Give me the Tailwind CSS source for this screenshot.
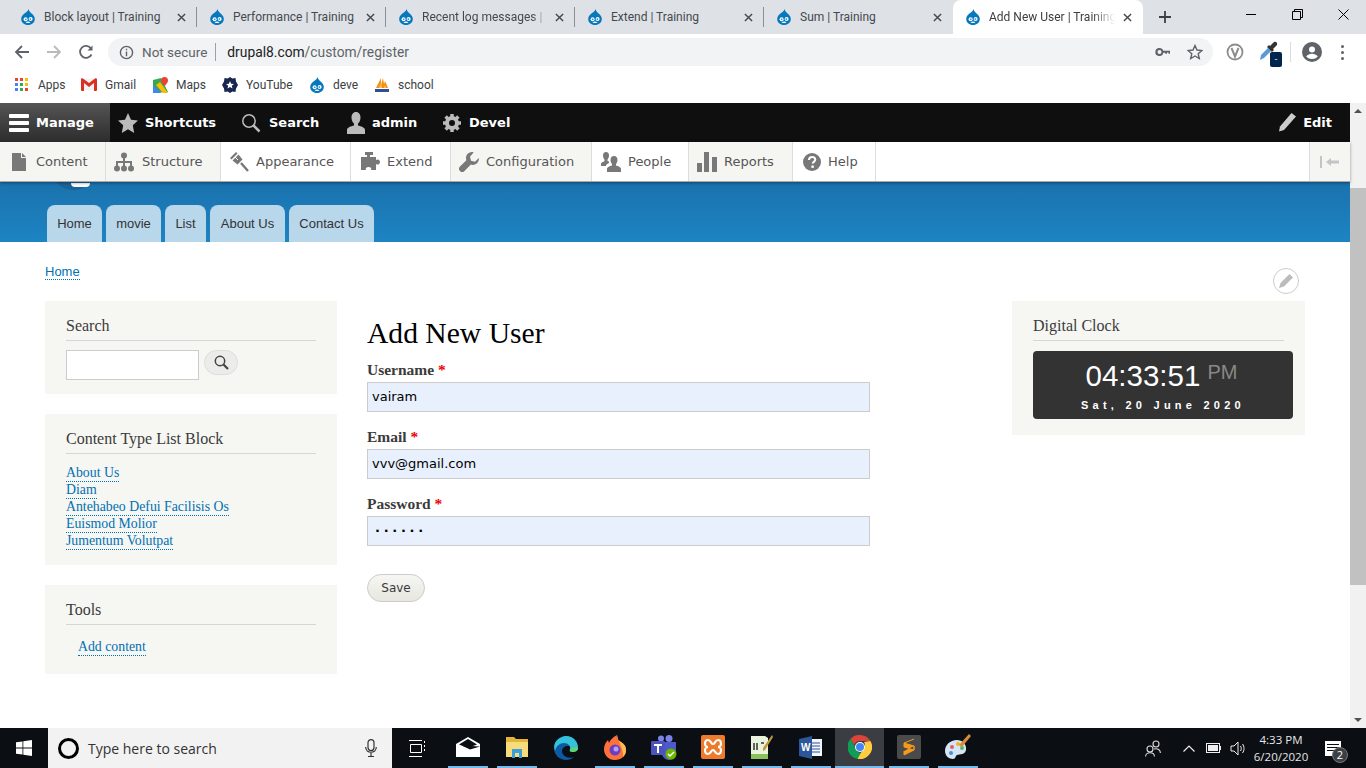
<!DOCTYPE html>
<html lang="en">
<head>
    <meta charset="UTF-8">
    <title>Add New User | Training</title>
    <script src="https://cdn.jsdelivr.net/npm/@tailwindcss/browser@4"></script>
</head>
<body class="w-[1366px] h-[768px] overflow-hidden flex flex-col bg-white font-['Roboto',sans-serif]">
    <svg class="hidden">
        <symbol id="drop" viewBox="0 0 16 16">
            <path fill="#0678be" d="M8.600 0c.3 2.600 2.400 3.700 3.900 5.300 1.500 1.500 2.300 3.100 2.300 4.700 0 3.500-3 6-6.800 6S1.200 13.500 1.200 10c0-2.400 1.600-4.200 3.500-5.700C6.300 3 8 2.300 8.600 0z"/>
            <circle cx="5.600" cy="10.200" r="2" fill="#fff"/>
            <circle cx="10.600" cy="10" r="2" fill="#fff"/>
            <path fill="#fff" d="M5.500 13.300c1.500-1 3.500-1 5 0-.6 1-4.400 1-5 0z"/>
            <circle cx="5.800" cy="10.300" r=".8" fill="#0678be"/>
            <circle cx="10.300" cy="10.100" r=".8" fill="#0678be"/>
        </symbol>
        <symbol id="close" viewBox="0 0 10 10">
            <path d="M1 1l8 8M9 1l-8 8" stroke="#45484c" stroke-width="1.600" fill="none"/>
        </symbol>
    </svg>

    <!-- browser tabs -->
    <div class="h-[34px] bg-[#dee1e6] flex pl-2 text-xs text-[#45494e] shrink-0">
        <div class="w-[189px] flex items-center relative">
            <svg class="w-4 h-4 ml-3"><use href="#drop"/></svg>
            <span class="ml-2 flex-1">Block layout | Training</span>
            <svg class="w-[9px] h-[9px] mr-[10px]"><use href="#close"/></svg>
            <span class="w-px h-[20px] bg-[#8c8f94]"></span>
        </div>
        <div class="w-[189px] flex items-center relative">
            <svg class="w-4 h-4 ml-3"><use href="#drop"/></svg>
            <span class="ml-2 flex-1">Performance | Training</span>
            <svg class="w-[9px] h-[9px] mr-[10px]"><use href="#close"/></svg>
            <span class="w-px h-[20px] bg-[#8c8f94]"></span>
        </div>
        <div class="w-[189px] flex items-center relative">
            <svg class="w-4 h-4 ml-3"><use href="#drop"/></svg>
            <span class="ml-2 w-[125px] overflow-hidden whitespace-nowrap [mask-image:linear-gradient(to_right,black_88%,transparent)]">Recent log messages | Training</span>
            <span class="flex-1"></span>
            <svg class="w-[9px] h-[9px] mr-[10px]"><use href="#close"/></svg>
            <span class="w-px h-[20px] bg-[#8c8f94]"></span>
        </div>
        <div class="w-[189px] flex items-center relative">
            <svg class="w-4 h-4 ml-3"><use href="#drop"/></svg>
            <span class="ml-2 flex-1">Extend | Training</span>
            <svg class="w-[9px] h-[9px] mr-[10px]"><use href="#close"/></svg>
            <span class="w-px h-[20px] bg-[#8c8f94]"></span>
        </div>
        <div class="w-[189px] flex items-center relative">
            <svg class="w-4 h-4 ml-3"><use href="#drop"/></svg>
            <span class="ml-2 flex-1">Sum | Training</span>
            <svg class="w-[9px] h-[9px] mr-[11px]"><use href="#close"/></svg>
        </div>
        <div class="w-[190px] flex items-center bg-white rounded-t-lg text-[#3c4043]">
            <svg class="w-4 h-4 ml-3"><use href="#drop"/></svg>
            <span class="ml-2 w-[126px] overflow-hidden whitespace-nowrap [mask-image:linear-gradient(to_right,black_82%,transparent)]">Add New User | Training</span>
            <span class="flex-1"></span>
            <svg class="w-[9px] h-[9px] mr-[11px]"><use href="#close"/></svg>
        </div>
        <svg class="w-3 h-3 ml-[16px] mt-[11px]" viewBox="0 0 12 12"><path d="M6 0v12M0 6h12" stroke="#3c4043" stroke-width="1.800"/></svg>
        <div class="ml-auto flex items-start">
            <div class="w-[46px] h-[28px] flex items-center justify-center"><span class="w-[10px] h-px bg-black"></span></div>
            <div class="w-[46px] h-[28px] flex items-center justify-center">
                <svg class="w-[11px] h-[11px]" viewBox="0 0 11 11" fill="none" stroke="#000"><path d="M.5 2.500h8v8h-8zM2.500 2.500v-2h8v8h-2"/></svg>
            </div>
            <div class="w-[46px] h-[28px] flex items-center justify-center">
                <svg class="w-[11px] h-[11px]" viewBox="0 0 11 11" stroke="#000"><path d="M.5.500l10 10M10.500.500l-10 10"/></svg>
            </div>
        </div>
    </div>

    <!-- address bar -->
    <div class="h-[36px] flex items-center shrink-0 relative">
        <svg class="w-4 h-4 ml-[14px]" viewBox="0 0 16 16" fill="none" stroke="#5f6368" stroke-width="1.800"><path d="M15 8H2M8 2L2 8l6 6"/></svg>
        <svg class="w-4 h-4 ml-[16px]" viewBox="0 0 16 16" fill="none" stroke="#b8babd" stroke-width="1.800"><path d="M1 8h13M8 2l6 6-6 6"/></svg>
        <svg class="w-4 h-4 ml-[16px]" viewBox="0 0 16 16" fill="none" stroke="#5f6368" stroke-width="1.800"><path d="M13.500 10.500A6 6 0 1 1 13 4.500"/><path fill="#5f6368" stroke="none" d="M14.500 1.500v5h-5z"/></svg>
        <div class="ml-[14px] w-[1105px] h-[28px] rounded-full bg-[#f1f3f4] flex items-center text-sm">
            <svg class="w-[15px] h-[15px] ml-[11px]" viewBox="0 0 16 16" fill="none" stroke="#5f6368" stroke-width="1.500"><circle cx="8" cy="8" r="6.500"/><path d="M8 7v5M8 4v1.600"/></svg>
            <span class="ml-[8px] pt-[1px] text-[#5f6368] text-[13.500px]">Not secure</span>
            <span class="ml-[8px] w-px h-[18px] bg-[#9aa0a6]"></span>
            <span class="ml-[11px] pt-[1px] text-[#202124] text-[13.800px]">drupal8.com<span class="text-[#5f6368]">/custom/register</span></span>
            <svg class="w-4 h-4 ml-auto" viewBox="0 0 16 16" fill="#5f6368"><path d="M4.500 4a4 4 0 0 1 3.800 2.800H15v3h-1.500v-1.300H12v1.300h-1.700V8.700H8.300A4 4 0 1 1 4.500 4zm0 2a2 2 0 1 0 0 4 2 2 0 0 0 0-4z"/></svg>
            <svg class="w-4 h-4 ml-[16px] mr-[10px]" viewBox="0 0 16 16" fill="none" stroke="#5f6368" stroke-width="1.400"><path d="M8 1.500l2 4.500 4.900.5-3.700 3.200 1.100 4.800L8 12l-4.300 2.500 1.100-4.800L1.100 6.500 6 6z"/></svg>
        </div>
        <svg class="w-[18px] h-[18px] ml-[13px]" viewBox="0 0 18 18" fill="none"><circle cx="9" cy="9" r="7.500" stroke="#8d8d8d" stroke-width="1.800"/><path d="M5.500 5l3.500 8.500L12.500 5" stroke="#8d8d8d" stroke-width="2"/></svg>
        <div class="relative w-[24px] h-[24px] ml-[13px]">
            <svg class="w-[22px] h-[22px]" viewBox="0 0 22 22"><path d="M3 20l1-5 7-7 3 3-7 7z" fill="#5b9bd5"/><path d="M10 7l5 5 2-2-1-1 4-4c1-3-2-4-3-3l-4 4-1-1z" fill="#333"/></svg>
            <span class="absolute right-[-1px] bottom-[-3px] w-[12px] h-[15px] rounded-[2px] bg-[#00264d] text-white text-[9px] leading-[15px] text-center">-</span>
        </div>
        <span class="ml-[9px] w-px h-[20px] bg-[#dadce0]"></span>
        <svg class="w-5 h-5 ml-[11px]" viewBox="0 0 20 20"><circle cx="10" cy="10" r="10" fill="#5f6368"/><circle cx="10" cy="7.500" r="3" fill="#fff"/><path d="M4.200 14.500c1.400-2 3.500-2.800 5.800-2.800s4.400.8 5.800 2.800c-1.500 1.700-3.500 2.500-5.800 2.500s-4.300-.8-5.800-2.500z" fill="#fff"/></svg>
        <div class="ml-[19px] flex flex-col gap-[3px]">
            <span class="w-[3px] h-[3px] rounded-full bg-[#5f6368]"></span>
            <span class="w-[3px] h-[3px] rounded-full bg-[#5f6368]"></span>
            <span class="w-[3px] h-[3px] rounded-full bg-[#5f6368]"></span>
        </div>
    </div>

    <!-- bookmarks -->
    <div class="h-[33px] flex items-center text-xs text-[#3c4043] shrink-0 border-b-[4px] border-white">
        <div class="ml-[15px] grid grid-cols-3 gap-[2px] w-[13px]">
            <span class="w-[3px] h-[3px] bg-[#ea4335]"></span><span class="w-[3px] h-[3px] bg-[#ea4335]"></span><span class="w-[3px] h-[3px] bg-[#fbbc05]"></span>
            <span class="w-[3px] h-[3px] bg-[#4285f4]"></span><span class="w-[3px] h-[3px] bg-[#34a853]"></span><span class="w-[3px] h-[3px] bg-[#fbbc05]"></span>
            <span class="w-[3px] h-[3px] bg-[#4285f4]"></span><span class="w-[3px] h-[3px] bg-[#34a853]"></span><span class="w-[3px] h-[3px] bg-[#ea4335]"></span>
        </div>
        <span class="ml-[10px] w-[43px]">Apps</span>
        <svg class="w-4 h-[13px]" viewBox="0 0 16 13"><path fill="#f1f1f1" d="M1 1h14v11H1z"/><path fill="#d93025" d="M0 1.500V12a1 1 0 0 0 1 1h2V5l5 4 5-4v8h2a1 1 0 0 0 1-1V1.500C16 .3 14.700 0 14 .5L8 5 2 .5C1.300 0 0 .3 0 1.500z"/></svg>
        <span class="ml-[8px] w-[48px]">Gmail</span>
        <svg class="w-[15px] h-4" viewBox="0 0 15 16"><path fill="#34a853" d="M0 3l8-2 7 14-15 1z"/><path fill="#4285f4" d="M0 8l8 8H0z"/><path fill="#fbbc05" d="M3 8l7 8h5L7 5z"/><path fill="#ea4335" d="M11.500 0A3.500 3.500 0 0 0 8 3.500C8 6 11.500 9 11.500 9S15 6 15 3.500A3.500 3.500 0 0 0 11.500 0z"/></svg>
        <span class="ml-[8px] w-[46px]">Maps</span>
        <svg class="w-4 h-4" viewBox="0 0 16 16"><path fill="#18254f" d="M8 0l2.300 1.500L13.500 1 14 4.500 16 8l-2 3.500-.5 3.500-3.200-.5L8 16l-2.300-1.500-3.200.5L2 11.500 0 8l2-3.500L2.500 1l3.200.5z"/><path fill="#fff" d="M8 4l1.100 2.700 2.900.2-2.200 1.900.7 2.800L8 10.100l-2.500 1.500.7-2.800L4 6.900l2.900-.2z"/></svg>
        <span class="ml-[8px] w-[63px]">YouTube</span>
        <svg class="w-4 h-4"><use href="#drop"/></svg>
        <span class="ml-[8px] w-[41px]">deve</span>
        <svg class="w-4 h-4" viewBox="0 0 16 16"><path fill="#f29111" d="M2 11L7 1v7l2-7 1 6 1-3 3 7z"/><path fill="#f7c26b" d="M5 11l2-5 1 5zM10 11l1-3 1 3z"/><path fill="#2f4f8f" d="M1 12h14v3H1z"/></svg>
        <span class="ml-[8px]">school</span>
    </div>

    <!-- page and scrollbar -->
    <div class="flex-1 flex min-h-0">
        <div class="flex-1 flex flex-col min-w-0">
            <!-- admin toolbar -->
            <div class="h-[39px] bg-[#0f0f0f] flex items-center text-white text-[13px] font-bold font-['DejaVu_Sans',sans-serif] shrink-0">
                <div class="w-[110px] h-full flex items-center bg-gradient-to-b from-[#555] to-[#2d2d2d]">
                    <div class="ml-[9px] w-[20px] flex flex-col gap-[3px]">
                        <span class="h-[4px] bg-white rounded-[1px]"></span>
                        <span class="h-[4px] bg-white rounded-[1px]"></span>
                        <span class="h-[4px] bg-white rounded-[1px]"></span>
                    </div>
                    <span class="ml-[7px]">Manage</span>
                </div>
                <svg class="w-[20px] h-[20px] ml-[8px]" viewBox="0 0 20 20"><path fill="#bbb" d="M10 0l3 6.700 7 .8-5.200 4.800L16.200 20 10 16.300 3.800 20l1.400-7.700L0 7.500l7-.8z"/></svg>
                <span class="ml-[7px] w-[96px]">Shortcuts</span>
                <svg class="w-[20px] h-[20px]" viewBox="0 0 20 20" fill="none" stroke="#bbb"><circle cx="8" cy="8" r="6.200" stroke-width="1.500"/><path d="M12.500 12.500l6 6" stroke-width="2.500"/></svg>
                <span class="ml-[8px] w-[72px]">Search</span>
                <svg class="w-[20px] h-[22px] ml-[5px]" viewBox="0 0 20 22"><path fill="#bbb" d="M10 0c3 0 4.500 2.500 4.500 5.500 0 2.500-1 5-2.500 6v2c3 .8 7 2 7 4.500V22H1v-4c0-2.500 4-3.700 7-4.500v-2c-1.500-1-2.500-3.500-2.500-6C5.500 2.500 7 0 10 0z"/></svg>
                <span class="ml-[6px] w-[70px]">admin</span>
                <svg class="w-[20px] h-[20px]" viewBox="0 0 20 20"><circle cx="10" cy="10" r="5" fill="none" stroke="#bbb" stroke-width="4"/><path d="M10 1v18M1 10h18M3.600 3.600l12.800 12.800M16.400 3.600L3.600 16.400" stroke="#bbb" stroke-width="3.500"/><circle cx="10" cy="10" r="3" fill="#0f0f0f"/></svg>
                <span class="ml-[7px]">Devel</span>
                <svg class="w-[19px] h-[19px] ml-auto" viewBox="0 0 19 19"><path fill="#ccc" d="M14.500 0L19 3.500 7 17l-5 1.500 1-5z"/></svg>
                <span class="ml-[7px] mr-[18px]">Edit</span>
            </div>
            <!-- toolbar tray -->
            <div class="h-[40px] flex text-[13px] text-[#565656] font-['DejaVu_Sans',sans-serif] border-b border-[#aaa] shadow-[0_1px_3px_rgba(0,0,0,0.4)] bg-white shrink-0 relative z-10">
                <div class="w-[106px] flex items-center bg-[#f5f5f2] border-r border-[#ddd]">
                    <svg class="w-[16px] h-[18px] ml-[11px]" viewBox="0 0 16 18"><path fill="#787878" d="M1 0h9v5h5v13H1zM11 0l4 4h-4z"/></svg>
                    <span class="ml-[9px]">Content</span>
                </div>
                <div class="w-[115px] flex items-center bg-[#f5f5f2] border-r border-[#ddd]">
                    <svg class="w-[20px] h-[20px] ml-[8px]" viewBox="0 0 20 20" fill="#787878"><circle cx="10" cy="3.500" r="3"/><circle cx="3" cy="16.500" r="3"/><circle cx="10" cy="16.500" r="3"/><circle cx="17" cy="16.500" r="3"/><path d="M9 5h2v4h7v6h-2v-4h-5v4H9v-4H4v4H2V9h7z"/></svg>
                    <span class="ml-[8px]">Structure</span>
                </div>
                <div class="w-[130px] flex items-center border-r border-[#ddd]">
                    <svg class="w-[20px] h-[20px] ml-[8px]" viewBox="0 0 20 20"><path fill="#787878" d="M7 0L1 6l1.500 1.500L8.500 1.500zM9.500 2.500L3.500 8.500l5 4 5-5z"/><path d="M12 11l7 8" stroke="#787878" stroke-width="2.400"/><path d="M6 5l3 3" stroke="#fff" stroke-width="1"/></svg>
                    <span class="ml-[7px]">Appearance</span>
                </div>
                <div class="w-[100px] flex items-center border-r border-[#ddd]">
                    <svg class="w-[20px] h-[20px] ml-[9px]" viewBox="0 0 20 20" fill="#787878"><path d="M5 0h8v3h-3v2h6v3c2-1.500 4 0 4 2s-2 3.500-4 2v6h-5c1-2-.5-3-2.500-3S5 16 6 18H1V5h6V3H5z"/></svg>
                    <span class="ml-[7px]">Extend</span>
                </div>
                <div class="w-[141px] flex items-center bg-[#f5f5f2] border-r border-[#ddd]">
                    <svg class="w-[20px] h-[20px] ml-[8px]" viewBox="0 0 20 20"><path fill="#787878" d="M13 0a6 6 0 0 0-5.600 8.200L1 14.500a3 3 0 0 0 4.500 4.500l6.400-6.400A6 6 0 0 0 19.800 6l-3.800 3.700-4-1-1-4L14.700.2A6 6 0 0 0 13 0z"/></svg>
                    <span class="ml-[7px]">Configuration</span>
                </div>
                <div class="w-[97px] flex items-center border-r border-[#ddd]">
                    <svg class="w-[20px] h-[20px] ml-[9px]" viewBox="0 0 20 20" fill="#787878"><path d="M5 0c2 0 3 1.500 3 3.500S7 7 6.500 7.500V9L8 9.500V11c-2 1-3 1.500-3 3H0v-2c0-1.500 2-2.200 3.500-2.800V7.500C3 7 2 5.500 2 3.500S3 0 5 0zM13 4c2.500 0 3.500 2 3.500 4s-1 3.500-1.500 4v1.500c2 .6 5 1.500 5 3.500v3H6v-3c0-2 3-2.900 5-3.500V12c-.5-.5-1.500-2-1.500-4s1-4 3.500-4z"/></svg>
                    <span class="ml-[7px]">People</span>
                </div>
                <div class="w-[104px] flex items-center bg-[#f5f5f2] border-r border-[#ddd]">
                    <svg class="w-[20px] h-[20px] ml-[8px]" viewBox="0 0 20 20" fill="#787878"><path d="M0 11h5v9H0zM7 0h5v20H7zM15 5h5v15h-5z"/></svg>
                    <span class="ml-[7px]">Reports</span>
                </div>
                <div class="w-[83px] flex items-center border-r border-[#ddd]">
                    <svg class="w-[18px] h-[18px] ml-[10px]" viewBox="0 0 18 18"><circle cx="9" cy="9" r="9" fill="#787878"/><path d="M6 7c0-4 6.300-4 6.300-.4 0 2.200-2.600 2.300-2.600 4" fill="none" stroke="#fff" stroke-width="2"/><rect x="8.400" y="12.500" width="2.400" height="2.400" fill="#fff"/></svg>
                    <span class="ml-[7px]">Help</span>
                </div>
                <div class="ml-auto w-[41px] flex items-center justify-center bg-[#f5f5f2] border-l border-[#ddd]">
                    <svg class="w-[20px] h-[12px]" viewBox="0 0 20 12" fill="#c4c4c4"><path d="M0 0h2v12H0zM6 6l5-4v2.500h8v3h-8V10z"/></svg>
                </div>
            </div>

            <!-- site header -->
            <div class="h-[60px] bg-gradient-to-b from-[#1a72ad] to-[#1d84c3] relative flex items-end pl-[47px] gap-1 text-[13px] text-[#333] font-['Liberation_Sans',sans-serif] shrink-0">
                <span class="absolute left-[50px] top-[-22px] w-[47px] h-[30px] rounded-b-full bg-[#1a6499]"></span>
                <span class="absolute left-[71px] top-[1px] w-[19px] h-[4px] rounded-b-full bg-white"></span>
                <a class="h-[37px] w-[55px] pt-[9px] text-center rounded-t-lg bg-[#b9d7eb] relative">Home</a>
                <a class="h-[37px] w-[55px] pt-[9px] text-center rounded-t-lg bg-[#b9d7eb] relative">movie</a>
                <a class="h-[37px] w-[41px] pt-[9px] text-center rounded-t-lg bg-[#b9d7eb] relative">List</a>
                <a class="h-[37px] w-[75px] pt-[9px] text-center rounded-t-lg bg-[#b9d7eb] relative">About Us</a>
                <a class="h-[37px] w-[85px] pt-[9px] text-center rounded-t-lg bg-[#b9d7eb] relative">Contact Us</a>
            </div>

            <!-- page content -->
            <div class="flex-1 relative pl-[45px] pt-[17px] font-['Liberation_Serif',serif] text-[#3b3b3b]">
                <a class="inline-block h-[16px] leading-[16px] text-[13px] text-[#0071b3] border-b border-dotted border-[#0071b3] font-['Liberation_Sans',sans-serif]">Home</a>
                <div class="absolute left-[1273px] top-[26px] w-[26px] h-[26px] rounded-full border border-[#ccc] bg-white flex items-center justify-center">
                    <svg class="w-[14px] h-[14px]" viewBox="0 0 14 14"><path fill="#bbb" d="M10.500 0L14 3.500 5 12.500 0 14l1.500-5z"/></svg>
                </div>
                <div class="flex mt-[18px]">
                    <!-- left sidebar -->
                    <div class="w-[292px] shrink-0 flex flex-col gap-5">
                        <div class="h-[93px] bg-[#f6f6f2] px-[21px] pt-[16px]">
                            <h2 class="text-[16px] leading-[18px] pb-[5px] border-b border-[#d6d6d2]">Search</h2>
                            <div class="flex mt-[9px] items-start">
                                <input class="w-[133px] h-[30px] border border-[#ccc] bg-white">
                                <button class="ml-[5px] w-[34px] h-[25px] rounded-full border border-[#ddd] bg-[#ececea] flex items-center justify-center">
                                    <svg class="w-[15px] h-[15px]" viewBox="0 0 15 15" fill="none" stroke="#444"><circle cx="6" cy="6" r="4.700" stroke-width="1.500"/><path d="M9.500 9.500l4.500 4.500" stroke-width="2.200"/></svg>
                                </button>
                            </div>
                        </div>
                        <div class="h-[151px] bg-[#f6f6f2] px-[21px] pt-[16px]">
                            <h2 class="text-[16px] leading-[18px] pb-[5px] border-b border-[#d6d6d2]">Content Type List Block</h2>
                            <div class="mt-[11px] flex flex-col items-start text-[13.800px] text-[#0071b3]">
                                <a class="h-[17px] leading-[16px] border-b border-dotted border-[#0071b3]">About Us</a>
                                <a class="h-[17px] leading-[16px] border-b border-dotted border-[#0071b3]">Diam</a>
                                <a class="h-[17px] leading-[16px] border-b border-dotted border-[#0071b3]">Antehabeo Defui Facilisis Os</a>
                                <a class="h-[17px] leading-[16px] border-b border-dotted border-[#0071b3]">Euismod Molior</a>
                                <a class="h-[17px] leading-[16px] border-b border-dotted border-[#0071b3]">Jumentum Volutpat</a>
                            </div>
                        </div>
                        <div class="h-[89px] bg-[#f6f6f2] px-[21px] pt-[16px]">
                            <h2 class="text-[16px] leading-[18px] pb-[5px] border-b border-[#d6d6d2]">Tools</h2>
                            <a class="inline-block ml-[12px] mt-[14px] h-[17px] leading-[16px] text-[13.800px] text-[#0071b3] border-b border-dotted border-[#0071b3]">Add content</a>
                        </div>
                    </div>
                    <!-- main form -->
                    <div class="ml-[30px] w-[503px] shrink-0">
                        <h1 class="text-[29.600px] leading-[34px] mt-[15px] text-black">Add New User</h1>
                        <form class="mt-[7px] flex flex-col">
                            <label class="block h-[25px] text-[15.500px] leading-[26px] font-bold">Username <span class="text-[#e00]">*</span></label>
                            <input value="vairam" class="w-[503px] h-[30px] px-[4px] pb-[2px] border border-[#ccc] bg-[#e8f0fe] text-black text-[13px] font-['DejaVu_Sans',sans-serif]">
                            <label class="block h-[25px] mt-[12px] text-[15.500px] leading-[26px] font-bold">Email <span class="text-[#e00]">*</span></label>
                            <input value="vvv@gmail.com" class="w-[503px] h-[30px] px-[4px] pb-[2px] border border-[#ccc] bg-[#e8f0fe] text-black text-[13px] font-['DejaVu_Sans',sans-serif]">
                            <label class="block h-[25px] mt-[12px] text-[15.500px] leading-[26px] font-bold">Password <span class="text-[#e00]">*</span></label>
                            <input value="······" class="w-[503px] h-[30px] pl-[7px] pb-[2px] border border-[#ccc] bg-[#e8f0fe] text-black text-[13px] font-bold tracking-[3.700px] font-['DejaVu_Sans',sans-serif]">
                            <button type="button" class="mt-[28px] w-[58px] h-[28px] rounded-full border border-[#ccc] bg-gradient-to-b from-[#f6f6f3] to-[#e7e7df] text-[12px] text-[#3a3a3a] font-['DejaVu_Sans',sans-serif]">Save</button>
                        </form>
                    </div>
                    <!-- clock block -->
                    <div class="ml-[142px] w-[293px] h-[134px] bg-[#f6f6f2] pl-[21px] pt-[16px] shrink-0">
                        <h2 class="w-[251px] text-[16px] leading-[18px] pb-[5px] border-b border-[#d6d6d2]">Digital Clock</h2>
                        <div class="mt-[10px] w-[260px] h-[68px] rounded-[4px] bg-[#333] text-center font-['Liberation_Sans',sans-serif]">
                            <div class="pt-[7px] pr-[3px] h-[40px] leading-[36px] text-[29.500px] text-white">04:33:51 <span class="relative top-[-7px] -ml-[1px] text-[20px] text-[#888]">PM</span></div>
                            <div class="mt-[7px] text-[11px] leading-[14px] font-bold tracking-[4.250px] text-white">Sat, 20 June 2020</div>
                        </div>
                    </div>
                </div>
            </div>
        </div>
        <!-- scrollbar -->
        <div class="w-[16px] bg-[#f1f1f1] flex flex-col items-center relative shrink-0">
            <span class="mt-[6px] w-0 h-0 border-x-[4px] border-x-transparent border-b-[4px] border-b-[#505050]"></span>
            <span class="absolute top-[85px] left-0 w-[16px] h-[397px] bg-[#c1c1c1]"></span>
            <span class="mt-auto mb-[6px] w-0 h-0 border-x-[4px] border-x-transparent border-t-[4px] border-t-[#505050]"></span>
        </div>
    </div>

    <!-- taskbar -->
    <div class="h-[40px] bg-[#0b0e13] flex text-white shrink-0">
        <div class="w-[48px] flex items-center justify-center">
            <svg class="w-4 h-4" viewBox="0 0 16 16" fill="#fff"><path d="M0 2.300l6.500-.9v6.200H0zM7.300 1.300L16 0v7.600H7.300zM0 8.400h6.500v6.200L0 13.700zM7.300 8.400H16V16l-8.700-1.300z"/></svg>
        </div>
        <div class="w-[344px] bg-[#f2f2f2] flex items-center text-[14px] text-[#333] font-['Open_Sans',sans-serif]">
            <span class="ml-[10px] w-[21px] h-[21px] rounded-full border-[3px] border-black"></span>
            <span class="ml-[9px] flex-1">Type here to search</span>
            <svg class="w-[12px] h-[18px] mr-[15px]" viewBox="0 0 12 18" fill="none" stroke="#333" stroke-width="1.200"><rect x="3" y=".6" width="6" height="11" rx="3"/><path d="M.7 8c0 7 10.600 7 10.600 0M6 14v3.500M3 17.500h6"/></svg>
        </div>
        <div class="w-[51px] flex items-center justify-center pr-[2px]">
            <svg class="w-[16px] h-[17px]" viewBox="0 0 16 17" fill="none" stroke="#fff"><path d="M0 .5h13M0 16.500h13M1.500 4.500h11v8h-11zM15.500 1v2M15.500 5v2M15.500 9v2"/></svg>
        </div>
        <div class="w-[49px] flex items-center justify-center">
            <div class="w-[40px] h-full flex items-center justify-center border-b-2 border-[#76b9ed]">
                <svg class="w-[24px] h-[20px]" viewBox="0 0 24 20"><path fill="#fff" d="M12 0l12 7v13H0V7z"/><path fill="#0b0e13" d="M3 7.500L12 2l9 5.500-9 3.500-4-1.500z"/><path fill="#0b0e13" d="M6 8.500l18 1-10 3z"/></svg>
            </div>
        </div>
        <div class="w-[49px] flex items-center justify-center">
            <div class="w-[40px] h-full flex items-center justify-center border-b-2 border-[#76b9ed]">
                <svg class="w-[22px] h-[22px]" viewBox="0 0 22 22"><path fill="#e5b53a" d="M0 1h8l2 2h12v18H0z"/><path fill="#f8dc7c" d="M0 6h22v15H0z"/><path fill="#3aa0dc" d="M6 13h10v9h-3v-5H9v5H6z"/></svg>
            </div>
        </div>
        <div class="w-[49px] flex items-center justify-center">
            <svg class="w-[24px] h-[24px]" viewBox="0 0 24 24"><path fill="#0c59a4" d="M12 0a12 12 0 0 0-12 12c0 7 5.500 12 12 12 3 0 6-1 8-3-6 2-12-1-12-6 0-3 3-5 6-5s6 1 6 3l4 1V12A12 12 0 0 0 12 0z"/><path fill="#35c1d9" d="M1 7C4 2 9 0 12 0c7 0 12 5 12 12 0 3-3 4-6 4-2 0-3-1-2-3 1-3-2-6-6-6-4 0-8 3-9 8-1-3-1-6 0-8z"/><path fill="#5ed46f" d="M16 13c0 2 1 3 2 3 3 0 6-1 6-4-1-1-4-1-8 1z"/></svg>
        </div>
        <div class="w-[49px] flex items-center justify-center">
            <div class="w-[40px] h-full flex items-center justify-center border-b-2 border-[#76b9ed]">
                <svg class="w-[24px] h-[25px]" viewBox="0 0 24 25"><path fill="#ff7139" d="M12 25C5 25 1 20 1 14 1 10 3 7 5 5l1 3c1-3 4-6 8-8-1 3 1 5 4 7 3 2 5 4 5 8 0 6-5 10-11 10z"/><path fill="#ffbd4f" d="M14 0c-1 3 1 5 4 7 3 2 5 4 5 8 0 3-1 5-3 7 1-7-4-13-6-22z"/><circle cx="12" cy="15" r="5.500" fill="#6a3fc7"/><circle cx="13" cy="14" r="2.500" fill="#b5a2ea"/></svg>
            </div>
        </div>
        <div class="w-[49px] flex items-center justify-center">
            <div class="w-[40px] h-full flex items-center justify-center border-b-2 border-[#76b9ed]">
                <svg class="w-[26px] h-[25px]" viewBox="0 0 26 25"><circle cx="18" cy="3.500" r="3.500" fill="#7b83eb"/><path fill="#5059c9" d="M11 7h14v11a5 5 0 0 1-14 0z"/><circle cx="10" cy="3.500" r="3" fill="#7b83eb"/><rect x="0" y="6" width="14" height="14" rx="1" fill="#4b53bc"/><path fill="#fff" d="M3 9h8v2H8v7H6v-7H3z"/><circle cx="20" cy="19" r="5.500" fill="#6bb700"/><path d="M17 19l2 2 4-4" stroke="#fff" stroke-width="1.500" fill="none"/></svg>
            </div>
        </div>
        <div class="w-[49px] flex items-center justify-center">
            <div class="w-[40px] h-full flex items-center justify-center border-b-2 border-[#76b9ed]">
                <svg class="w-[24px] h-[24px]" viewBox="0 0 24 24"><rect width="24" height="24" rx="2" fill="#ee7a2b"/><path d="M7 5c3 0 3 4 5 4s2-4 5-4 3 3 3 4-1 3-3 3c2 0 3 2 3 3s0 4-3 4-3-4-5-4-2 4-5 4-3-3-3-4 1-3 3-3c-2 0-3-2-3-3s0-4 3-4z" fill="none" stroke="#fff" stroke-width="2.200"/></svg>
            </div>
        </div>
        <div class="w-[49px] flex items-center justify-center">
            <div class="w-[40px] h-full flex items-center justify-center border-b-2 border-[#76b9ed]">
                <svg class="w-[23px] h-[25px]" viewBox="0 0 23 25"><path fill="#e9f3dd" d="M1 1h14l3 2v21H1z"/><path fill="#8fbf5c" d="M1 19h17v5H1z"/><path d="M4 8v7M7 8v7M11 8h3" stroke="#333" stroke-width="1.500"/><path d="M22 0l1 2-8 13-2 1 0-3z" fill="#c49a3c"/></svg>
            </div>
        </div>
        <div class="w-[49px] flex items-center justify-center">
            <div class="w-[40px] h-full flex items-center justify-center border-b-2 border-[#76b9ed]">
                <svg class="w-[23px] h-[23px]" viewBox="0 0 23 23"><path fill="#f3f6fb" d="M10 3h13v17H10z"/><path d="M13 7h8M13 10h8M13 13h8M13 16h8" stroke="#2b579a"/><path fill="#2b579a" d="M0 3l13-3v23L0 20z"/><text x="2" y="15" font-size="10" font-weight="700" fill="#fff" font-family="Liberation Sans">W</text></svg>
            </div>
        </div>
        <div class="w-[49px] flex items-center justify-center bg-[#3a3d42] border-b-2 border-[#76b9ed]">
            <svg class="w-[24px] h-[24px]" viewBox="0 0 24 24"><path fill="#db4437" d="M12 0a12 12 0 0 1 10.400 6H12a6 6 0 0 0-5.700 4L2.500 4A12 12 0 0 1 12 0z"/><path fill="#0f9d58" d="M2.500 4l5 8.700a6 6 0 0 0 5.600 5.200L9.500 23.800A12 12 0 0 1 2.500 4z"/><path fill="#ffcd40" d="M22.400 6A12 12 0 0 1 9.500 23.800l5.200-9A6 6 0 0 0 16 7z"/><circle cx="12" cy="12" r="5" fill="#fff"/><circle cx="12" cy="12" r="4" fill="#4285f4"/></svg>
        </div>
        <div class="w-[49px] flex items-center justify-center">
            <div class="w-[40px] h-full flex items-center justify-center border-b-2 border-[#76b9ed]">
                <svg class="w-[24px] h-[24px]" viewBox="0 0 24 24"><rect width="24" height="24" rx="2" fill="#4a4a4a"/><path d="M17 4L7 8v4l10 3v-4L7 8M17 11v4L7 20v-4" fill="#f79a1b" stroke="#f79a1b"/></svg>
            </div>
        </div>
        <div class="w-[49px] flex items-center justify-center">
            <div class="w-[40px] h-full flex items-center justify-center border-b-2 border-[#76b9ed]">
                <svg class="w-[26px] h-[26px]" viewBox="0 0 26 26"><path fill="#d4e6f5" d="M12 6C5 6 0 11 0 17c0 5 4 8 8 8 3 0 2-3 4-4 3-1 8 0 9-5 1-6-4-10-9-10z"/><circle cx="7" cy="13" r="2" fill="#e35d5d"/><circle cx="13" cy="10" r="2" fill="#f0b429"/><circle cx="6" cy="19" r="2" fill="#4a90d9"/><circle cx="17" cy="14" r="2" fill="#5cb85c"/><path d="M24 0l2 2-9 11-3-2z" fill="#d98a3d"/></svg>
            </div>
        </div>
        <div class="ml-auto flex items-center text-[11.500px] text-[#e6e6e6] font-['Open_Sans',sans-serif]">
            <svg class="w-[16px] h-[17px]" viewBox="0 0 16 17" fill="none" stroke="#ddd" stroke-width="1.100"><circle cx="5" cy="9" r="3"/><path d="M.6 16.500c0-5 8.800-5 8.800 0"/><circle cx="11" cy="4" r="3"/><path d="M9 9c4-1 6.400 1 6.400 4"/></svg>
            <svg class="w-[12px] h-[7px] ml-[22px]" viewBox="0 0 12 7" fill="none" stroke="#eee" stroke-width="1.200"><path d="M.5 6.500L6 1l5.500 5.500"/></svg>
            <svg class="w-[15px] h-[10px] ml-[11px]" viewBox="0 0 15 10"><rect x=".5" y=".5" width="13" height="9" fill="none" stroke="#eee"/><rect x="2" y="2" width="10" height="6" fill="#eee"/><rect x="14" y="3" width="1" height="4" fill="#eee"/></svg>
            <svg class="w-[16px] h-[15px] ml-[9px]" viewBox="0 0 16 15" fill="none" stroke="#eee"><path d="M1 5h3l4-4v13l-4-4H1zM10.500 5c1 1.500 1 3.500 0 5M12.500 3c2 2.500 2 6.500 0 9"/></svg>
            <div class="ml-[2px] w-[66px] text-center leading-[16px] pt-[1px]">
                <div>4:33 PM</div>
                <div class="mt-[1px]">6/20/2020</div>
            </div>
            <div class="relative w-[16px] h-[15px] ml-[11px] mr-[25px] bg-white">
                <span class="block mt-[3px] mx-[2px] h-px bg-[#0b0e13]"></span>
                <span class="block mt-[2px] mx-[2px] h-px bg-[#0b0e13]"></span>
                <span class="block mt-[2px] mx-[2px] h-px bg-[#0b0e13]"></span>
                <span class="absolute left-[7px] top-[6px] w-[16px] h-[16px] rounded-full bg-[#3c3f44] border border-[#777] text-[11px] leading-[14px] text-center text-white">2</span>
            </div>
        </div>
    </div>
</body>
</html>
